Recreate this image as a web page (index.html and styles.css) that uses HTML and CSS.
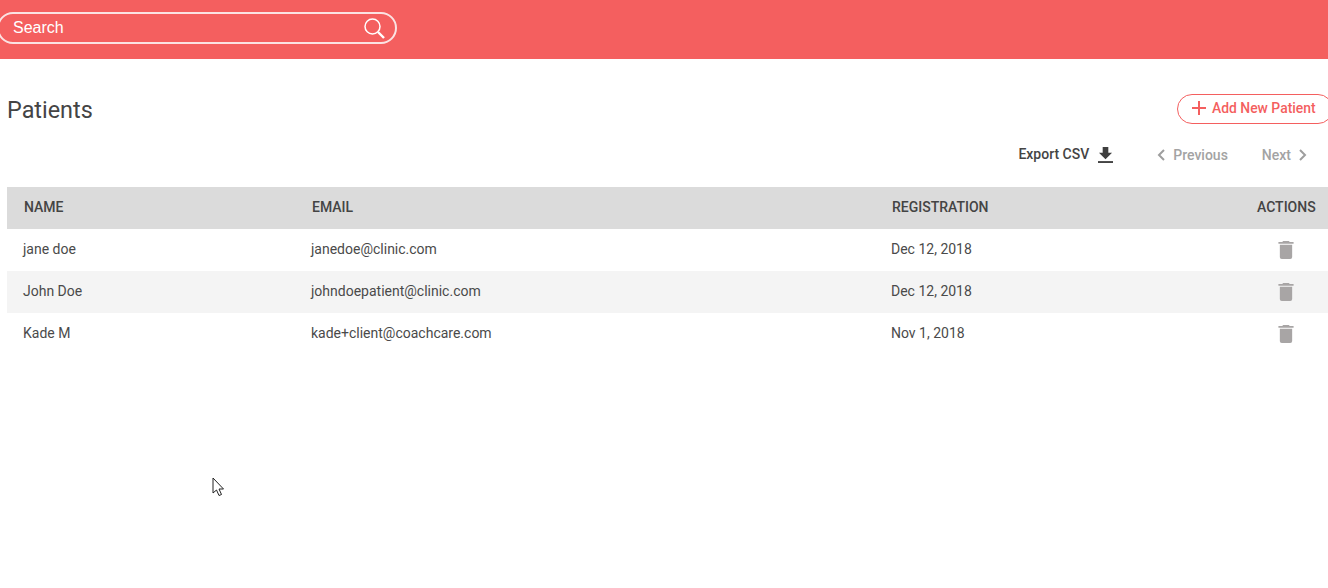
FILE: index.html
```
<!DOCTYPE html>
<html lang="en">
<head>
<meta charset="utf-8">
<title>Patients</title>
<link rel="stylesheet" href="styles.css">
</head>
<body>
<header class="topbar">
  <div class="search">
    <span class="search-label">Search</span>
    <svg class="search-icon" width="21" height="21" viewBox="0 0 21 21" fill="none" stroke="#fff"><circle cx="8.500" cy="8.500" r="7.500" stroke-width="1.500"/><path d="M14 14l6 6" stroke-width="2.400"/></svg>
  </div>
</header>
<main class="content">
  <div class="title-row">
    <h1 class="title">Patients</h1>
    <button class="add-btn">
      <svg width="16" height="16" viewBox="0 0 16 16" stroke="#f45f5f" stroke-width="2"><path d="M8 1v14M1 8h14"/></svg>
      <span>Add New Patient</span>
    </button>
  </div>
  <div class="tools">
    <span class="export">Export CSV</span>
    <svg class="export-icon" width="15" height="16" viewBox="0 0 16 17" fill="#3f3f3f"><path d="M5 0h6v6h4l-7 7-7-7h4z"/><rect y="15" width="16" height="2"/></svg>
    <span class="pager prev">
      <svg width="9" height="12" viewBox="0 0 9 12" fill="none" stroke="#9e9e9e" stroke-width="2"><path d="M7 1L2 6l5 5"/></svg>
      Previous
    </span>
    <span class="pager next">
      Next
      <svg width="9" height="12" viewBox="0 0 9 12" fill="none" stroke="#9e9e9e" stroke-width="2"><path d="M2 1l5 5-5 5"/></svg>
    </span>
  </div>
  <div class="table">
    <div class="row head">
      <div class="c-name">NAME</div><div class="c-email">EMAIL</div><div class="c-reg">REGISTRATION</div><div class="c-act">ACTIONS</div>
    </div>
    <div class="row">
      <div class="c-name">jane doe</div><div class="c-email">janedoe@clinic.com</div><div class="c-reg">Dec 12, 2018</div>
      <div class="c-act"><svg class="trash" width="16" height="18" viewBox="0 0 16 19" fill="#a8a5a5"><path d="M5 0h6l1 1h4v2H0V1h4z"/><path d="M1.500 4h13v13a2 2 0 0 1-2 2h-9a2 2 0 0 1-2-2z"/></svg></div>
    </div>
    <div class="row alt">
      <div class="c-name">John Doe</div><div class="c-email">johndoepatient@clinic.com</div><div class="c-reg">Dec 12, 2018</div>
      <div class="c-act"><svg class="trash" width="16" height="18" viewBox="0 0 16 19" fill="#a8a5a5"><path d="M5 0h6l1 1h4v2H0V1h4z"/><path d="M1.500 4h13v13a2 2 0 0 1-2 2h-9a2 2 0 0 1-2-2z"/></svg></div>
    </div>
    <div class="row">
      <div class="c-name">Kade M</div><div class="c-email">kade+client@coachcare.com</div><div class="c-reg">Nov 1, 2018</div>
      <div class="c-act"><svg class="trash" width="16" height="18" viewBox="0 0 16 19" fill="#a8a5a5"><path d="M5 0h6l1 1h4v2H0V1h4z"/><path d="M1.500 4h13v13a2 2 0 0 1-2 2h-9a2 2 0 0 1-2-2z"/></svg></div>
    </div>
  </div>
</main>
<svg class="cursor" width="13" height="20" viewBox="0 0 13 20" fill="#fff" stroke="#222" stroke-width="1"><path d="M1 1v15l3.500-3 2.500 5.500 2.500-1-2.500-5.500h4.500z"/></svg>
</body>
</html>
```
FILE: styles.css
```
* { box-sizing: border-box; }
html, body { margin: 0; height: 100%; overflow: hidden; }
body { background: #fff; font-family: Roboto, sans-serif; color: #444; position: relative; }
.topbar { height: 59px; background: #f45f5f; padding-top: 12px; }
.search { width: 400px; height: 32px; margin-left: -3px; border: 2px solid #fbe3e3; border-radius: 16px; display: flex; align-items: center; justify-content: space-between; padding: 0 10px 0 14px; color: #fff; }
.search-label { font: 16px "Liberation Sans", Arial, sans-serif; }
.content { padding-left: 7px; }
.title-row { display: flex; justify-content: space-between; align-items: flex-start; height: 80px; padding-top: 35px; }
.title { margin: 0; font-size: 23.400px; line-height: 32px; font-weight: 400; color: #444; }
.add-btn { width: 156px; height: 30px; margin-right: -5px; flex: none; border: 1px solid #f45f5f; border-radius: 15px; background: #fff; color: #f45f5f; font: 500 13.900px Roboto, sans-serif; display: flex; align-items: center; gap: 5px; padding: 0 0 2px 13px; }
.tools { display: flex; align-items: center; justify-content: flex-end; height: 32px; font-size: 14px; font-weight: 500; padding-right: 21px; }
.export { color: #444; margin-bottom: 2px; }
.export-icon { margin-left: 9px; }
.pager { color: #a3a3a3; display: flex; align-items: center; gap: 7px; }
.prev { margin-left: 44px; }
.next { margin-left: 34px; }
.table { margin-top: 16px; font-size: 14px; }
.row { display: flex; align-items: center; height: 42px; padding: 0 0 2px 16px; color: #4a4a4a; }
.head { background: #dbdbdb; font-weight: 500; color: #444; padding-left: 17px; }
.alt { background: #f4f4f4; }
.c-name { width: 288px; }
.c-email { width: 580px; }
.c-reg { width: 365px; flex: none; }
.c-act { display: flex; justify-content: center; width: 60px; }
.trash { margin-top: 2px; }
.head .c-act { justify-content: flex-start; }
.cursor { position: absolute; left: 212px; top: 477px; }
```
